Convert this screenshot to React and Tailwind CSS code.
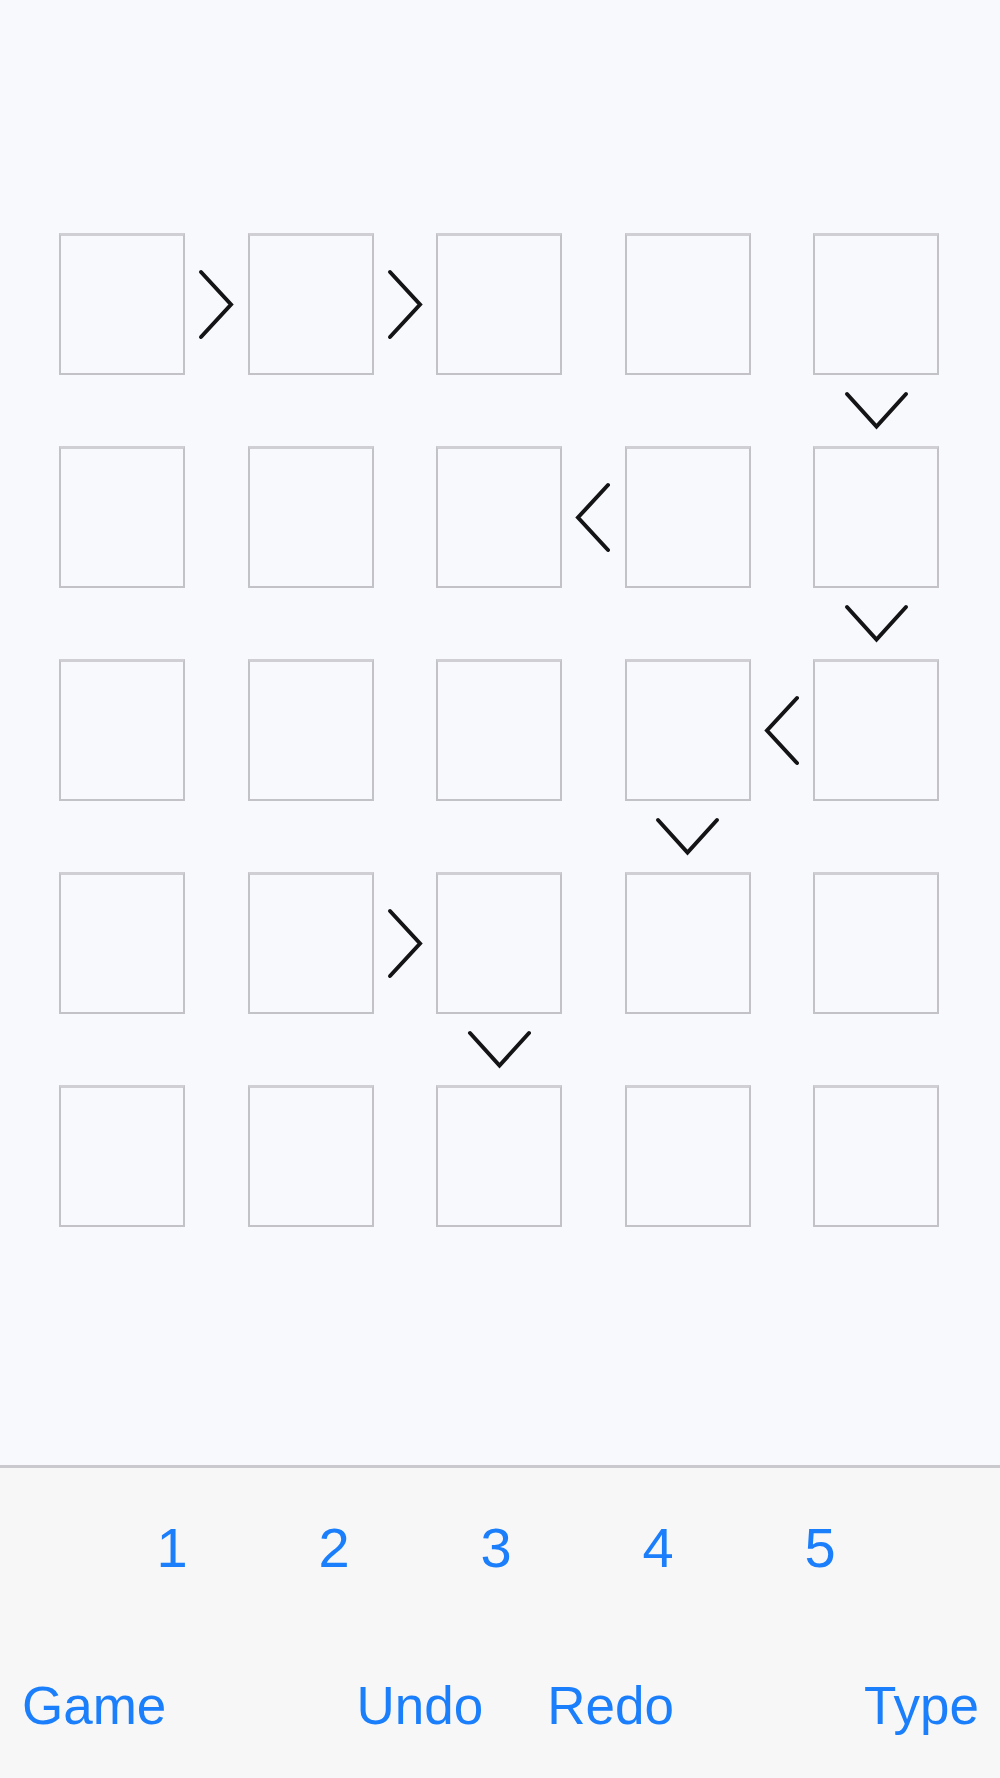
import React from "react";

// puzzle clues: h = arrow between cells in a row, v = arrow between rows
// key "r,c" -> arrow pointing direction
const H_ARROWS = {
  "0,0": ">",
  "0,1": ">",
  "1,2": "<",
  "2,3": "<",
  "3,1": ">",
};
const V_ARROWS = {
  "0,4": "v",
  "1,4": "v",
  "2,3": "v",
  "3,2": "v",
};

function HArrow({ dir }) {
  const d = dir === ">" ? "M3 3 L33 35.5 L3 68" : "M33 3 L3 35.5 L33 68";
  return (
    <svg width="36" height="71" viewBox="0 0 36 71" fill="none">
      <path d={d} stroke="#141416" strokeWidth="4" strokeLinecap="round" strokeLinejoin="miter" />
    </svg>
  );
}

function VArrow() {
  return (
    <svg width="65" height="39" viewBox="0 0 65 39" fill="none">
      <path d="M3 3 L32.5 35.5 L62 3" stroke="#141416" strokeWidth="4" strokeLinecap="round" strokeLinejoin="miter" />
    </svg>
  );
}

function Board() {
  const cells = [];
  for (let gr = 0; gr < 9; gr++) {
    for (let gc = 0; gc < 9; gc++) {
      const r = Math.floor(gr / 2);
      const c = Math.floor(gc / 2);
      const key = `${gr}-${gc}`;
      if (gr % 2 === 0 && gc % 2 === 0) {
        cells.push(
          <div
            key={key}
            className="border-2 border-t-[3px] border-[#c2c2c7] border-t-[#cfcfd4]"
          />
        );
      } else if (gr % 2 === 0) {
        const a = H_ARROWS[`${r},${c}`];
        cells.push(
          <div key={key} className="flex items-center justify-center">
            {a && <HArrow dir={a} />}
          </div>
        );
      } else if (gc % 2 === 0) {
        const a = V_ARROWS[`${r},${c}`];
        cells.push(
          <div key={key} className="flex items-center justify-center">
            {a && <VArrow />}
          </div>
        );
      } else {
        cells.push(<div key={key} />);
      }
    }
  }
  return (
    <div className="grid grid-cols-[repeat(4,126px_62.5px)_126px] grid-rows-[repeat(4,142px_71px)_142px] w-fit">
      {cells}
    </div>
  );
}

export default function App() {
  return (
    <div
      className="w-[1000px] h-[1778px] flex flex-col overflow-hidden"
      style={{ fontFamily: '"Liberation Sans", Arial, sans-serif' }}
    >
      {/* board area */}
      <div className="h-[1465px] bg-[#f8f9fd] pt-[233px] pl-[59px]">
        <Board />
      </div>

      {/* separator */}
      <div className="h-[3px] bg-[#c9c9ce]" />

      {/* toolbar */}
      <div className="flex-1 bg-[#f7f7f7] text-[#1b7ffb] pt-[52px]">
        <div className="flex justify-center pr-[8px]">
          {["1", "2", "3", "4", "5"].map((n) => (
            <div key={n} className="w-[162px] text-center text-[56px] leading-[56px]">
              {n}
            </div>
          ))}
        </div>
        <div className="mt-[103px] flex items-center pl-[22px] pr-[21px] text-[53px] leading-[53px]">
          <span>Game</span>
          <div className="flex-1 flex justify-center gap-[64px]">
            <span>Undo</span>
            <span>Redo</span>
          </div>
          <span>Type</span>
        </div>
      </div>
    </div>
  );
}
